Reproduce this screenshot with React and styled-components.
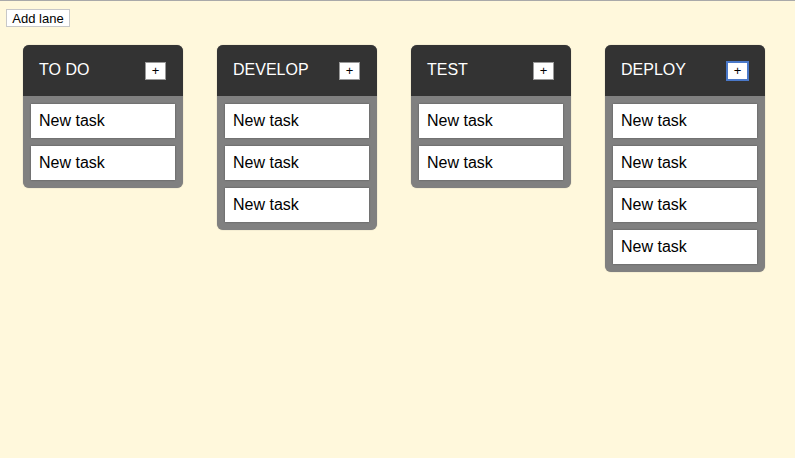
import React from 'react';
import styled, { createGlobalStyle } from 'styled-components';

const colors = {
  page: '#fff8dc',
  header: '#333333',
  lane: '#808080',
  white: '#ffffff',
  text: '#000000',
  line: '#a9a9a9',
  focus: '#4a78c8',
};

const GlobalStyle = createGlobalStyle`
  html, body {
    margin: 0;
    padding: 0;
    background: ${colors.page};
    font-family: Arial, 'Liberation Sans', sans-serif;
  }
  body {
    border-top: 1px solid ${colors.line};
    min-height: 457px;
  }
`;

const Page = styled.div`
  padding: 8px 6px 0;
`;

const AddLaneButton = styled.button`
  display: block;
  height: 18px;
  width: 64px;
  padding: 0;
  font-family: Arial, 'Liberation Sans', sans-serif;
  font-size: 13px;
  color: ${colors.text};
  background: ${colors.white};
  border: 1px solid #c8c8c8;
  border-radius: 0;
`;

const Board = styled.div`
  display: flex;
  align-items: flex-start;
  gap: 34px;
  margin: 18px 0 0 17px;
`;

const Lane = styled.div`
  width: 160px;
  border-radius: 6px;
  overflow: hidden;
  background: ${colors.lane};
  box-shadow: 0 0 1px rgba(0, 0, 0, 0.4);
`;

const LaneHeader = styled.div`
  height: 51px;
  background: ${colors.header};
  display: flex;
  align-items: center;
  justify-content: space-between;
  padding: 0 17px 2px 16px;
  box-sizing: border-box;
`;

const LaneTitle = styled.span`
  color: ${colors.white};
  font-size: 16px;
`;

const PlusButton = styled.button`
  width: 21px;
  height: 18px;
  margin-top: 2px;
  padding: 0;
  background: ${colors.white};
  border: 1px solid ${props => (props.$focused ? colors.focus : '#9a9a9a')};
  box-shadow: ${props => (props.$focused ? `0 0 0 1px ${colors.focus}` : 'none')};
  font-family: Arial, 'Liberation Sans', sans-serif;
  font-size: 13px;
  line-height: 16px;
  color: ${colors.text};
`;

const TaskList = styled.div`
  display: flex;
  flex-direction: column;
  gap: 8px;
  padding: 8px;
`;

const Task = styled.div`
  height: 34px;
  box-sizing: border-box;
  padding: 0 8px;
  display: flex;
  align-items: center;
  background: ${colors.white};
  box-shadow: 0 0 2px rgba(0, 0, 0, 0.35);
  font-size: 16px;
  color: ${colors.text};
`;

const lanes = [
  { title: 'TO DO', tasks: 2 },
  { title: 'DEVELOP', tasks: 3 },
  { title: 'TEST', tasks: 2 },
  { title: 'DEPLOY', tasks: 4, focused: true },
];

export default function App() {
  return (
    <Page>
      <GlobalStyle />
      <AddLaneButton>Add lane</AddLaneButton>
      <Board>
        {lanes.map(lane => (
          <Lane key={lane.title}>
            <LaneHeader>
              <LaneTitle>{lane.title}</LaneTitle>
              <PlusButton $focused={lane.focused}>+</PlusButton>
            </LaneHeader>
            <TaskList>
              {Array.from({ length: lane.tasks }).map((_, i) => (
                <Task key={i}>New task</Task>
              ))}
            </TaskList>
          </Lane>
        ))}
      </Board>
    </Page>
  );
}
